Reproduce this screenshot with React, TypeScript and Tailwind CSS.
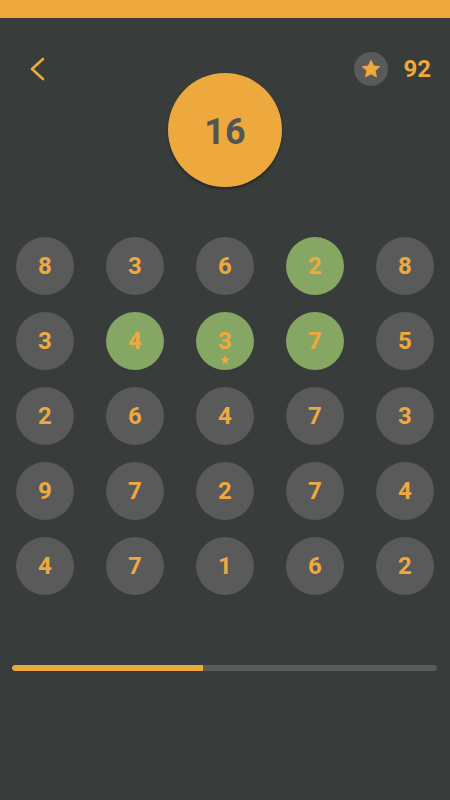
import React from "react";

const grid: { n: number; green?: boolean; star?: boolean }[][] = [
  [{ n: 8 }, { n: 3 }, { n: 6 }, { n: 2, green: true }, { n: 8 }],
  [{ n: 3 }, { n: 4, green: true }, { n: 3, green: true, star: true }, { n: 7, green: true }, { n: 5 }],
  [{ n: 2 }, { n: 6 }, { n: 4 }, { n: 7 }, { n: 3 }],
  [{ n: 9 }, { n: 7 }, { n: 2 }, { n: 7 }, { n: 4 }],
  [{ n: 4 }, { n: 7 }, { n: 1 }, { n: 6 }, { n: 2 }],
];

function Star({ size, className }: { size: number; className?: string }) {
  return (
    <svg width={size} height={size} viewBox="0 0 24 24" className={className}>
      <path
        d="M12 2.5l2.9 6.1 6.6.8-4.9 4.6 1.3 6.6L12 17.3l-5.9 3.3 1.3-6.6-4.9-4.6 6.6-.8z"
        fill="#EEA93E"
        strokeLinejoin="round"
        stroke="#EEA93E"
        strokeWidth="1"
      />
    </svg>
  );
}

export default function App() {
  return (
    <div
      className="w-[450px] h-[800px] bg-[#383C3B] flex flex-col"
      style={{ fontFamily: "Roboto, 'Liberation Sans', sans-serif" }}
    >
      <div className="h-[18px] bg-[#EEA93E] shrink-0" />
      <div className="mt-[31px] h-[40px] flex items-center justify-between pl-[28px] pr-[19px]">
        <svg width="20" height="26" viewBox="0 0 20 26">
          <path d="M15 3 L4 13 L15 23" fill="none" stroke="#EEA93E" strokeWidth="2.6" strokeLinecap="round" strokeLinejoin="round" />
        </svg>
        <div className="flex items-center gap-[15px]">
          <div className="w-[34px] h-[34px] rounded-full bg-[#5A5A5A] flex items-center justify-center">
            <Star size={22} />
          </div>
          <span className="text-[24px] font-bold text-[#EEA93E] leading-none">92</span>
        </div>
      </div>
      <div className="-mt-[16px] flex justify-center">
        <div className="w-[114px] h-[114px] rounded-full bg-[#EEA93E] flex items-center justify-center shadow-[0_2px_3px_rgba(0,0,0,0.35)]">
          <span className="pt-[4px] text-[36px] font-bold text-[#555555] leading-none">16</span>
        </div>
      </div>
      <div className="mt-[50px] flex flex-col gap-[17px]">
        {grid.map((row, i) => (
          <div key={i} className="grid grid-cols-5">
            {row.map((c, j) => (
              <div key={j} className="flex justify-center">
                <div
                  className={`relative w-[58px] h-[58px] rounded-full flex items-center justify-center ${
                    c.green ? "bg-[#86A664]" : "bg-[#5A5A5A]"
                  }`}
                >
                  <span className="text-[24px] font-bold text-[#EEA93E] leading-none">{c.n}</span>
                  {c.star && (
                    <div className="absolute left-1/2 -translate-x-1/2 top-[43px]">
                      <Star size={10} />
                    </div>
                  )}
                </div>
              </div>
            ))}
          </div>
        ))}
      </div>
      <div className="mt-[70px] ml-[12px] mr-[13px] h-[6px] rounded-full bg-[#5A5A5A] flex overflow-hidden">
        <div className="h-full bg-[#EEA93E] rounded-l-full" style={{ width: "45%" }} />
      </div>
    </div>
  );
}
